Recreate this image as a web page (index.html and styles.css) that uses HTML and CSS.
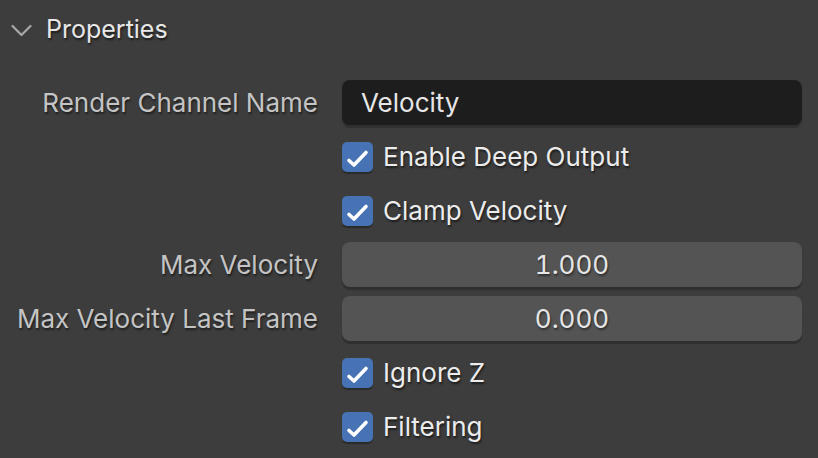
FILE: index.html
```html
<!DOCTYPE html>
<html>
<head>
<meta charset="utf-8">
<link rel="stylesheet" href="styles.css">
</head>
<body>
<div class="panel">
  <div class="header">
    <svg class="chevron" width="22" height="14" viewBox="0 0 22 14"><path d="M1.5 2 L10.5 11 L19.5 2" fill="none" stroke="#a8a8a8" stroke-width="2.2" stroke-linecap="round" stroke-linejoin="round"/></svg>
    <span class="title">Properties</span>
  </div>
  <div class="grid">
    <div class="label">Render Channel Name</div>
    <div class="text-field">Velocity</div>

    <div class="label"></div>
    <div class="check-row"><span class="checkbox"><svg width="31" height="30" viewBox="0 0 31 30"><path d="M7 18.5 L12 23 L24 10.5" fill="none" stroke="#fff" stroke-width="3.6" stroke-linecap="round" stroke-linejoin="round"/></svg></span><span class="check-label">Enable Deep Output</span></div>

    <div class="label"></div>
    <div class="check-row"><span class="checkbox"><svg width="31" height="30" viewBox="0 0 31 30"><path d="M7 18.5 L12 23 L24 10.5" fill="none" stroke="#fff" stroke-width="3.6" stroke-linecap="round" stroke-linejoin="round"/></svg></span><span class="check-label">Clamp Velocity</span></div>

    <div class="label">Max Velocity</div>
    <div class="num-field">1.000</div>

    <div class="label">Max Velocity Last Frame</div>
    <div class="num-field">0.000</div>

    <div class="label"></div>
    <div class="check-row"><span class="checkbox"><svg width="31" height="30" viewBox="0 0 31 30"><path d="M7 18.5 L12 23 L24 10.5" fill="none" stroke="#fff" stroke-width="3.6" stroke-linecap="round" stroke-linejoin="round"/></svg></span><span class="check-label">Ignore Z</span></div>

    <div class="label"></div>
    <div class="check-row"><span class="checkbox"><svg width="31" height="30" viewBox="0 0 31 30"><path d="M7 18.5 L12 23 L24 10.5" fill="none" stroke="#fff" stroke-width="3.6" stroke-linecap="round" stroke-linejoin="round"/></svg></span><span class="check-label">Filtering</span></div>
  </div>
</div>
</body>
</html>
```

FILE: styles.css
```css
html, body {
  margin: 0;
  padding: 0;
  background: #3d3d3d;
  width: 818px;
  height: 458px;
  overflow: hidden;
}
body {
  font-family: Inter, "DejaVu Sans", sans-serif;
  font-size: 26px;
  color: #e6e6e6;
}
.panel {
  display: flex;
  flex-direction: column;
}
.header {
  display: flex;
  align-items: center;
  height: 58px;
  padding-left: 11px;
  gap: 13px;
}
.chevron {
  display: block;
  margin-top: 3px;
}
.title {
  color: #e8e8e8;
  font-size: 25px;
  text-shadow: 1px 2px 2px rgba(0,0,0,0.55);
}
.grid {
  display: grid;
  grid-template-columns: 318px 460px;
  column-gap: 24px;
  row-gap: 9px;
  grid-auto-rows: 45px;
  margin-top: 22px;
}
.label {
  display: flex;
  align-items: center;
  justify-content: flex-end;
  color: #c4c4c4;
  text-shadow: 1px 2px 2px rgba(0,0,0,0.5);
  white-space: nowrap;
}
.text-field {
  background: #1d1d1d;
  border-radius: 8px;
  display: flex;
  align-items: center;
  padding-left: 19px;
  color: #e6e6e6;
  box-shadow: 0 3px 1px rgba(0,0,0,0.22);
}
.num-field {
  background: #545454;
  border-radius: 8px;
  display: flex;
  align-items: center;
  justify-content: center;
  color: #e6e6e6;
  font-variant-numeric: tabular-nums;
  text-shadow: 1px 2px 2px rgba(0,0,0,0.45);
  box-shadow: 0 3px 1px rgba(0,0,0,0.22);
}
.check-row {
  display: flex;
  align-items: center;
  gap: 10px;
}
.checkbox {
  width: 31px;
  height: 30px;
  background: #4772b3;
  border-radius: 5px;
  display: block;
  box-shadow: 0 2px 1px rgba(0,0,0,0.3);
}
.checkbox svg {
  display: block;
}
.check-label {
  color: #ececec;
  text-shadow: 1px 2px 2px rgba(0,0,0,0.55);
}
```
